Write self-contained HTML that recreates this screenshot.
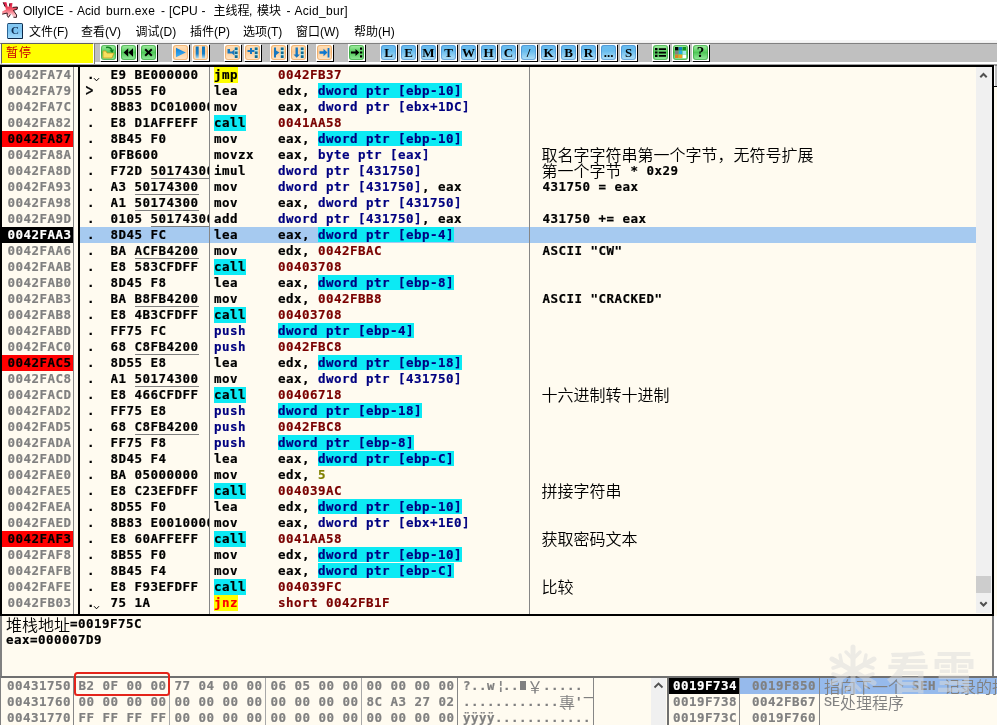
<!DOCTYPE html>
<html lang="zh-CN">
<head>
<meta charset="utf-8">
<title>OllyICE - Acid burn.exe</title>
<style>
*{box-sizing:border-box;margin:0;padding:0}
html,body{width:997px;height:725px;overflow:hidden;background:#fff}
body{position:relative;font-family:"Liberation Sans","Noto Sans CJK SC",sans-serif;font-size:12px;color:#000}
#root{position:absolute;left:0;top:0;width:997px;height:725px;overflow:hidden;will-change:transform;background:#fff}
.abs{position:absolute}
/* title + menu */
#title{position:absolute;left:0;top:0;width:997px;height:22px;background:#fff}
#title .t{position:absolute;top:3px;font-size:12px;line-height:16px;white-space:pre}
#menu{position:absolute;left:0;top:22px;width:997px;height:20px;background:#fff}
#menu span{position:absolute;top:2px;font-size:12px;line-height:16px;white-space:pre}
/* toolbar */
#tb{position:absolute;left:0;top:42px;width:997px;height:23px;background:#c0c0c0;border-top:1px solid #f0f0f0}
#tb .ln{position:absolute;left:0;top:0;width:997px;height:1px;background:#808080}
#tb .lb{position:absolute;left:0;top:19px;width:997px;height:2px;background:#fff}
#tb .lb2{position:absolute;left:0;top:21px;width:997px;height:1px;background:#a0a0a0}
#st{position:absolute;left:1px;top:0px;width:93px;height:21px;background:#ffff00;border-left:1px solid #606060;border-top:1px solid #606060;border-right:1px solid #fff;border-bottom:1px solid #fff}
#st span{position:absolute;left:4px;top:2px;font:12px/14px "Liberation Sans","Noto Sans CJK SC",sans-serif;color:#c80000;letter-spacing:1px}
.bt{position:absolute;top:1px;width:17px;height:17px;background:#fff;box-shadow:1px 1px 0 #000}
.bi{position:absolute;left:1px;top:1px;width:15px;height:15px;border-radius:3px;font:bold 13px/15px "Liberation Serif",serif;text-align:center;color:#000;overflow:hidden}
.bi svg{position:absolute;left:0;top:0}
.bi span{position:absolute;left:0;top:0;width:15px;text-align:center}
.g{background:linear-gradient(#a8f0a8,#50c858 50%,#98eca0);box-shadow:inset 0 0 0 1px rgba(40,150,50,.55)}
.o{background:linear-gradient(#ffe2bc,#fccc98 45%,#ffe8cc);box-shadow:inset 0 0 0 1px rgba(230,150,70,.55)}
.b{background:linear-gradient(#6cbef0,#68bcee 40%,#b4e2f8);box-shadow:inset 0 0 0 1px rgba(60,130,200,.55)}
/* panes */
.mono{-webkit-text-stroke:0.2px currentColor;font:bold 12.5px/16px "DejaVu Sans Mono","Liberation Mono",monospace;letter-spacing:0.4744px;white-space:pre}
#cpu{position:absolute;left:0;top:65px;width:994px;height:551px;border:2px solid #000;background:#fffbf0;overflow:hidden}
#cpuin{position:absolute;left:-2px;top:-67px;width:997px;height:725px}
.vl{position:absolute;width:1px;background:#868686}
.row{-webkit-text-stroke:0.2px currentColor;position:absolute;left:0;width:976px;height:16px;font:bold 12.5px/16px "DejaVu Sans Mono","Liberation Mono",monospace;letter-spacing:0.4744px;white-space:pre}
.row span,.row i{position:absolute;top:0;height:16px}
.row b{font-weight:bold}
.selbar{left:80px;width:896px;background:#a6caf0}
.a{left:2px;width:71px;padding-left:5.5px;color:#808080}
.abp{background:#ff0000;color:#000}
.asel{background:#000;color:#fff}
.mk{left:87px}
.mkgt{left:85.500px;font-weight:normal;font-size:13px;transform:scale(1,1.4);transform-origin:0 62%}
.jv{position:absolute;left:93px;top:10px}
.hx{left:110.500px;width:98.500px;overflow:hidden}
.hx u{text-decoration:none;display:inline-block;height:16px;border-bottom:1px solid #808080}
.mn{left:214px}
.mj{background:#ffff00}
.mz{background:#ffff00;color:#ff0000}
.mc{background:#0ceaf4}
.mp{color:#000080}
.op{left:278px}
.ok{color:#000}.on{color:#000080}.oc{color:#000080;background:#0ceaf4}.om{color:#7a0000}.oo{color:#808000}
.cm{left:542.500px}
.cm .zh{position:relative;left:-1px;top:-1px;display:inline-block;vertical-align:top;font:16px/16px "Noto Sans CJK SC","Noto Serif CJK SC",sans-serif;letter-spacing:0;font-weight:350;-webkit-text-stroke:0}
.cm .la{position:static}
.sb{position:absolute;background:#f0f0f0}
.th{position:absolute;background:#cdcdcd}

/* lower panes */
#info{position:absolute;left:0;top:616px;width:994px;height:60px;background:#fffbf0;border-left:2px solid #808080;border-right:2px solid #808080}
#info .r{position:absolute;left:4px;height:16px;color:#000}
#info .zh{display:inline-block;vertical-align:top;height:16px;font:16px/16px "Noto Sans CJK SC","Noto Serif CJK SC",sans-serif;letter-spacing:0;font-weight:350;-webkit-text-stroke:0}
#dump{position:absolute;left:0;top:676px;width:667px;height:49px;background:#fffbf0;border-top:2px solid #707070;border-left:1px solid #808080;overflow:hidden}
#stack{position:absolute;left:667px;top:676px;width:330px;height:49px;background:#fffbf0;border-top:2px solid #707070;border-left:2px solid #707070;overflow:hidden}
.dr{position:absolute;height:16px;color:#808080}
.dr>span{position:absolute;top:0;height:16px}
.szh{display:inline-block;vertical-align:top;height:16px;font:16px/16px "Noto Sans CJK SC","Noto Serif CJK SC",sans-serif;letter-spacing:0;font-weight:350;-webkit-text-stroke:0}
.blk{display:inline-block;vertical-align:top;width:6px;height:9px;margin:3px 1px 0 1px;background:#808080;color:transparent;overflow:hidden;font-size:8px;line-height:9px;letter-spacing:0}
.asc{width:130px;overflow:hidden}
#red{position:absolute;left:73.500px;top:672px;width:96.500px;height:23.500px;border:2.400px solid #e4241a;border-radius:3.500px}
#wm{position:absolute;left:824px;top:642px;width:160px;height:52px;color:#dcdcdc;opacity:0.5;white-space:pre;overflow:hidden}
</style>
</head>
<body>
<div id="root">
<div id="title">
<svg class="abs" style="left:0;top:0" width="20" height="20" viewBox="0 0 20 20"><defs><linearGradient id="ic" x1="0" y1="0" x2="0" y2="1"><stop offset="0" stop-color="#d80c3c"/><stop offset="0.450" stop-color="#f45868"/><stop offset="1" stop-color="#ffe4e6"/></linearGradient></defs><path d="M3.200 2.200 L6.400 2.200 L7.600 6.800 L9.600 6.500 L9.800 3.200 L12.400 3 L12 7.400 L17.400 7 L17.200 9.200 L13.400 10.400 L16.600 15 L16.400 17.400 L13.400 17.200 L10.800 13.200 L10 15.400 L8.400 17.400 L7.200 15.400 L7.200 13 L2.200 14.200 L2.200 11.400 L6 9.600 L5 6.600 Z" fill="url(#ic)"/><path d="M12.600 7.400 L17.400 7 L17.200 9.200 L13.400 10.400 L16.600 15 L16.400 17.400 L13.400 17.200 M10.400 14.400 L8.400 17.400 L7.200 15.400 L7.200 13 L2.200 14.200 M3.200 2.400 L5 6.600 M9.700 3.400 L9.600 6.400" fill="none" stroke="#200008" stroke-width="0.900" stroke-linejoin="round"/></svg>
<span class="t" style="left:23px">OllyICE </span><span class="t" style="left:69px">- </span><span class="t" style="left:77px">Acid </span><span class="t" style="left:106px;letter-spacing:0.3px">burn.exe </span><span class="t" style="left:161px">- </span><span class="t" style="left:169px">[CPU </span><span class="t" style="left:201.5px">- </span><span class="t" style="left:213.5px">主线程</span><span class="t" style="left:249px">, </span><span class="t" style="left:257px">模块 </span><span class="t" style="left:286.5px">- </span><span class="t" style="left:294.5px;letter-spacing:0.3px">Acid_bur]</span>
</div>
<div id="menu">
<div class="abs" style="left:7px;top:1px;width:16px;height:16px;border-radius:1.500px;background:linear-gradient(#84c8f2,#7cc4f2 50%,#a6dcfc);border:1px solid #2c6494;border-top-color:#1c4468;border-right-color:#0c2848;border-bottom-color:#0c2848;font:bold 11px/13px 'Liberation Serif',serif;text-align:center;color:#0c2c50">C</div>
<span style="left:29px">文件(F)</span><span style="left:81px">查看(V)</span><span style="left:135.5px">调试(D)</span><span style="left:190px">插件(P)</span><span style="left:243px">选项(T)</span><span style="left:296px">窗口(W)</span><span style="left:354px">帮助(H)</span>
</div>
<div id="tb">
<div class="ln"></div><div class="lb"></div><div class="lb2"></div>
<div id="st"><span>暂停</span></div>
<div class="abs" style="left:94px;top:0;width:1px;height:21px;background:#808080"></div><div class="abs" style="left:0;top:1px;width:1px;height:20px;background:#f4f4f4"></div>
<div class="bt" style="left:100px"><div class="bi g"><svg width="15" height="15" viewBox="0 0 15 15"><path d="M2 6 L2 13 L11 13 L13 8 L6 8 L5 6 Z" fill="#f8e060" stroke="#c0a020" stroke-width="0.8"/><path d="M5 2.5 C8 1.5 10.5 3 11 6" fill="none" stroke="#108020" stroke-width="1.6"/><path d="M8.5 5.5 L11.3 8 L13 4.5 Z" fill="#108020"/></svg></div></div>
<div class="bt" style="left:120px"><div class="bi g"><svg width="15" height="15" viewBox="0 0 15 15"><path d="M7.2 3.2 L7.2 11.8 L2.6 7.5 Z M12 3.2 L12 11.8 L7.4 7.5 Z" fill="#000"/></svg></div></div>
<div class="bt" style="left:140px"><div class="bi g"><svg width="15" height="15" viewBox="0 0 15 15"><path d="M4.2 4.2 L10.8 10.8 M10.8 4.2 L4.2 10.8" stroke="#000" stroke-width="2" fill="none"/></svg></div></div>
<div class="bt" style="left:172px"><div class="bi o"><svg width="15" height="15" viewBox="0 0 15 15"><defs><linearGradient id="pg" x1="0" y1="0" x2="0" y2="1"><stop offset="0" stop-color="#0c80d8"/><stop offset="1" stop-color="#48b0f0"/></linearGradient></defs><path d="M3 2.800 L12.800 7.500 L3 12.200 Z" fill="url(#pg)"/></svg></div></div>
<div class="bt" style="left:192px"><div class="bi o"><svg width="15" height="15" viewBox="0 0 15 15"><defs><linearGradient id="pb" x1="0" y1="0" x2="0" y2="1"><stop offset="0" stop-color="#0c70b8"/><stop offset="0.600" stop-color="#1880c8"/><stop offset="1" stop-color="#b8e0f0"/></linearGradient></defs><path d="M2.700 1.500 h3 v12 h-3 Z M9 1.500 h3 v12 h-3 Z" fill="url(#pb)"/></svg></div></div>
<div class="bt" style="left:224px"><div class="bi o"><svg width="15" height="15" viewBox="0 0 15 15"><path d="M2.5 4 h2.5 v2.5 h2 L9.5 4.5 v6 L7 8.5 h-4.5 Z" fill="#1878c0"/><path d="M9.800 2.500 h2.800 v10.400 h-2.800Z" fill="#a8e4f0"/><path d="M9.800 2.500 h2.800 v2.600 h-2.800Z M9.800 6.400 h2.800 v2.600 h-2.800Z M9.800 10.300 h2.800 v2.600 h-2.800Z" fill="#106c94"/></svg></div></div>
<div class="bt" style="left:244px"><div class="bi o"><svg width="15" height="15" viewBox="0 0 15 15"><path d="M2.5 5 h2.5 v-2 h2 v2 h2.5 v2 h-2.500 v2 h-2 v-2 h-2.5Z" fill="#1878c0"/><path d="M9.800 2.500 h2.800 v10.400 h-2.800Z" fill="#a8e4f0"/><path d="M9.800 2.500 h2.800 v2.600 h-2.800Z M9.800 6.400 h2.800 v2.600 h-2.800Z M9.800 10.300 h2.800 v2.600 h-2.800Z" fill="#106c94"/></svg></div></div>
<div class="bt" style="left:270px"><div class="bi o"><svg width="15" height="15" viewBox="0 0 15 15"><path d="M3 2.5 h2 v3 L8.5 7.5 L5 10 v2.5 h-2 Z" fill="#1878c0"/><path d="M9.800 2.500 h2.800 v10.400 h-2.800Z" fill="#a8e4f0"/><path d="M9.800 2.500 h2.800 v2.600 h-2.800Z M9.800 6.400 h2.800 v2.600 h-2.800Z M9.800 10.300 h2.800 v2.600 h-2.800Z" fill="#106c94"/></svg></div></div>
<div class="bt" style="left:290px"><div class="bi o"><svg width="15" height="15" viewBox="0 0 15 15"><path d="M4.5 2.5 h2.4 v7 h2 L5.7 12.8 L2.5 9.5 h2 Z" fill="#1878c0"/><path d="M9.800 2.500 h2.800 v10.400 h-2.800Z" fill="#a8e4f0"/><path d="M9.800 2.500 h2.800 v2.600 h-2.800Z M9.800 6.400 h2.800 v2.600 h-2.800Z M9.800 10.300 h2.800 v2.600 h-2.800Z" fill="#106c94"/></svg></div></div>
<div class="bt" style="left:316px"><div class="bi o"><svg width="15" height="15" viewBox="0 0 15 15"><path d="M2.5 6.3 h4 v-2.5 L10.5 7.5 L6.5 11.2 v-2.500 h-4 Z" fill="#1078d0"/><path d="M10.6 3 h1.800 v9.500 h-1.800Z" fill="#1078d0"/></svg></div></div>
<div class="bt" style="left:348px"><div class="bi g"><svg width="15" height="15" viewBox="0 0 15 15"><path d="M2 6.500 h4.500 v-2.500 L10.300 7.500 L6.500 11 v-2.500 h-4.500 Z" fill="#000"/><path d="M11 2.500 h2.200 v2.200 h-2.200Z M11 6.400 h2.200 v2.200 h-2.200Z M11 10.300 h2.200 v2.200 h-2.200Z" fill="#000"/></svg></div></div>
<div class="bt" style="left:380px"><div class="bi b"><span>L</span></div></div>
<div class="bt" style="left:400px"><div class="bi b"><span>E</span></div></div>
<div class="bt" style="left:420px"><div class="bi b"><span>M</span></div></div>
<div class="bt" style="left:440px"><div class="bi b"><span>T</span></div></div>
<div class="bt" style="left:460px"><div class="bi b"><span>W</span></div></div>
<div class="bt" style="left:480px"><div class="bi b"><span>H</span></div></div>
<div class="bt" style="left:500px"><div class="bi b"><span>C</span></div></div>
<div class="bt" style="left:520px"><div class="bi b"><span>/</span></div></div>
<div class="bt" style="left:540px"><div class="bi b"><span>K</span></div></div>
<div class="bt" style="left:560px"><div class="bi b"><span>B</span></div></div>
<div class="bt" style="left:580px"><div class="bi b"><span>R</span></div></div>
<div class="bt" style="left:600px"><div class="bi b"><span>...</span></div></div>
<div class="bt" style="left:620px"><div class="bi b"><span>S</span></div></div>
<div class="bt" style="left:652px"><div class="bi g"><svg width="15" height="15" viewBox="0 0 15 15"><path d="M2 3 h2.500 v2.200 h-2.500Z M2 6.400 h2.500 v2.200 h-2.500Z M2 9.800 h2.500 v2.200 h-2.500Z M5.800 3.300 h7.200 v1.700 h-7.200Z M5.800 6.700 h7.200 v1.700 h-7.200Z M5.800 10.100 h7.200 v1.700 h-7.200Z" fill="#000"/></svg></div></div>
<div class="bt" style="left:672px"><div class="bi g"><svg width="15" height="15" viewBox="0 0 15 15"><rect x="2" y="2" width="3.500" height="3.500" fill="#000"/><rect x="5.800" y="2" width="3.500" height="3.500" fill="#1080c0"/><rect x="9.600" y="2" width="3.500" height="3.500" fill="#109020"/><rect x="2" y="5.800" width="3.500" height="3.500" fill="#808080"/><rect x="5.800" y="5.800" width="3.500" height="3.500" fill="#20b0e0"/><rect x="9.600" y="5.800" width="3.500" height="3.500" fill="#a0e8f0"/><rect x="2" y="9.600" width="3.500" height="3.500" fill="#e08020"/><rect x="5.800" y="9.600" width="3.500" height="3.500" fill="#f0a020"/><rect x="9.600" y="9.600" width="3.500" height="3.500" fill="#ffffff"/></svg></div></div>
<div class="bt" style="left:692px"><div class="bi g"><span style="font-size:15px">?</span></div></div>
</div>
<div id="cpu"><div id="cpuin">
<div class="vl" style="left:73px;top:67px;height:547px"></div>
<div class="abs" style="left:78px;top:67px;width:2px;height:547px;background:#000"></div>
<div class="row" style="top:67px"><span class="a">0042FA74</span><span class="mk">.</span><svg class="jv" width="8" height="6" viewBox="0 0 8 6"><path d="M1 1.200 L3.500 3.800 L6 1.200" fill="none" stroke="#000" stroke-width="1"/></svg><span class="hx">E9 BE000000</span><span class="mn mj">jmp</span><span class="op"><b class="om">0042FB37</b></span></div>
<div class="row" style="top:83px"><span class="a">0042FA79</span><span class="mk mkgt">&gt;</span><span class="hx">8D55 F0</span><span class="mn ">lea</span><span class="op"><b class="ok">edx, </b><b class="oc">dword ptr [ebp-10]</b></span></div>
<div class="row" style="top:99px"><span class="a">0042FA7C</span><span class="mk">.</span><span class="hx">8B83 DC010000</span><span class="mn ">mov</span><span class="op"><b class="ok">eax, </b><b class="on">dword ptr [ebx+1DC]</b></span></div>
<div class="row" style="top:115px"><span class="a">0042FA82</span><span class="mk">.</span><span class="hx">E8 D1AFFEFF</span><span class="mn mc">call</span><span class="op"><b class="om">0041AA58</b></span></div>
<div class="row" style="top:131px"><span class="a abp">0042FA87</span><span class="mk">.</span><span class="hx">8B45 F0</span><span class="mn ">mov</span><span class="op"><b class="ok">eax, </b><b class="oc">dword ptr [ebp-10]</b></span></div>
<div class="row" style="top:147px"><span class="a">0042FA8A</span><span class="mk">.</span><span class="hx">0FB600</span><span class="mn ">movzx</span><span class="op"><b class="ok">eax, </b><b class="on">byte ptr [eax]</b></span><span class="cm"><span class="zh">取名字字符串第一个字节，无符号扩展</span></span></div>
<div class="row" style="top:163px"><span class="a">0042FA8D</span><span class="mk">.</span><span class="hx">F72D <u>50174300</u></span><span class="mn ">imul</span><span class="op"><b class="on">dword ptr [431750]</b></span><span class="cm"><span class="zh">第一个字节</span><span class="la"> * 0x29</span></span></div>
<div class="row" style="top:179px"><span class="a">0042FA93</span><span class="mk">.</span><span class="hx">A3 <u>50174300</u></span><span class="mn ">mov</span><span class="op"><b class="on">dword ptr [431750]</b><b class="ok">, eax</b></span><span class="cm"><span class="la">431750 = eax</span></span></div>
<div class="row" style="top:195px"><span class="a">0042FA98</span><span class="mk">.</span><span class="hx">A1 <u>50174300</u></span><span class="mn ">mov</span><span class="op"><b class="ok">eax, </b><b class="on">dword ptr [431750]</b></span></div>
<div class="row" style="top:211px"><span class="a">0042FA9D</span><span class="mk">.</span><span class="hx">0105 <u>50174300</u></span><span class="mn ">add</span><span class="op"><b class="on">dword ptr [431750]</b><b class="ok">, eax</b></span><span class="cm"><span class="la">431750 += eax</span></span></div>
<div class="row" style="top:227px"><i class="selbar"></i><span class="a asel">0042FAA3</span><span class="mk">.</span><span class="hx">8D45 FC</span><span class="mn ">lea</span><span class="op"><b class="ok">eax, </b><b class="oc">dword ptr [ebp-4]</b></span></div>
<div class="row" style="top:243px"><span class="a">0042FAA6</span><span class="mk">.</span><span class="hx">BA <u>ACFB4200</u></span><span class="mn ">mov</span><span class="op"><b class="ok">edx, </b><b class="om">0042FBAC</b></span><span class="cm"><span class="la">ASCII "CW"</span></span></div>
<div class="row" style="top:259px"><span class="a">0042FAAB</span><span class="mk">.</span><span class="hx">E8 583CFDFF</span><span class="mn mc">call</span><span class="op"><b class="om">00403708</b></span></div>
<div class="row" style="top:275px"><span class="a">0042FAB0</span><span class="mk">.</span><span class="hx">8D45 F8</span><span class="mn ">lea</span><span class="op"><b class="ok">eax, </b><b class="oc">dword ptr [ebp-8]</b></span></div>
<div class="row" style="top:291px"><span class="a">0042FAB3</span><span class="mk">.</span><span class="hx">BA <u>B8FB4200</u></span><span class="mn ">mov</span><span class="op"><b class="ok">edx, </b><b class="om">0042FBB8</b></span><span class="cm"><span class="la">ASCII "CRACKED"</span></span></div>
<div class="row" style="top:307px"><span class="a">0042FAB8</span><span class="mk">.</span><span class="hx">E8 4B3CFDFF</span><span class="mn mc">call</span><span class="op"><b class="om">00403708</b></span></div>
<div class="row" style="top:323px"><span class="a">0042FABD</span><span class="mk">.</span><span class="hx">FF75 FC</span><span class="mn mp">push</span><span class="op"><b class="oc">dword ptr [ebp-4]</b></span></div>
<div class="row" style="top:339px"><span class="a">0042FAC0</span><span class="mk">.</span><span class="hx">68 <u>C8FB4200</u></span><span class="mn mp">push</span><span class="op"><b class="om">0042FBC8</b></span></div>
<div class="row" style="top:355px"><span class="a abp">0042FAC5</span><span class="mk">.</span><span class="hx">8D55 E8</span><span class="mn ">lea</span><span class="op"><b class="ok">edx, </b><b class="oc">dword ptr [ebp-18]</b></span></div>
<div class="row" style="top:371px"><span class="a">0042FAC8</span><span class="mk">.</span><span class="hx">A1 <u>50174300</u></span><span class="mn ">mov</span><span class="op"><b class="ok">eax, </b><b class="on">dword ptr [431750]</b></span></div>
<div class="row" style="top:387px"><span class="a">0042FACD</span><span class="mk">.</span><span class="hx">E8 466CFDFF</span><span class="mn mc">call</span><span class="op"><b class="om">00406718</b></span><span class="cm"><span class="zh">十六进制转十进制</span></span></div>
<div class="row" style="top:403px"><span class="a">0042FAD2</span><span class="mk">.</span><span class="hx">FF75 E8</span><span class="mn mp">push</span><span class="op"><b class="oc">dword ptr [ebp-18]</b></span></div>
<div class="row" style="top:419px"><span class="a">0042FAD5</span><span class="mk">.</span><span class="hx">68 <u>C8FB4200</u></span><span class="mn mp">push</span><span class="op"><b class="om">0042FBC8</b></span></div>
<div class="row" style="top:435px"><span class="a">0042FADA</span><span class="mk">.</span><span class="hx">FF75 F8</span><span class="mn mp">push</span><span class="op"><b class="oc">dword ptr [ebp-8]</b></span></div>
<div class="row" style="top:451px"><span class="a">0042FADD</span><span class="mk">.</span><span class="hx">8D45 F4</span><span class="mn ">lea</span><span class="op"><b class="ok">eax, </b><b class="oc">dword ptr [ebp-C]</b></span></div>
<div class="row" style="top:467px"><span class="a">0042FAE0</span><span class="mk">.</span><span class="hx">BA 05000000</span><span class="mn ">mov</span><span class="op"><b class="ok">edx, </b><b class="oo">5</b></span></div>
<div class="row" style="top:483px"><span class="a">0042FAE5</span><span class="mk">.</span><span class="hx">E8 C23EFDFF</span><span class="mn mc">call</span><span class="op"><b class="om">004039AC</b></span><span class="cm"><span class="zh">拼接字符串</span></span></div>
<div class="row" style="top:499px"><span class="a">0042FAEA</span><span class="mk">.</span><span class="hx">8D55 F0</span><span class="mn ">lea</span><span class="op"><b class="ok">edx, </b><b class="oc">dword ptr [ebp-10]</b></span></div>
<div class="row" style="top:515px"><span class="a">0042FAED</span><span class="mk">.</span><span class="hx">8B83 E0010000</span><span class="mn ">mov</span><span class="op"><b class="ok">eax, </b><b class="on">dword ptr [ebx+1E0]</b></span></div>
<div class="row" style="top:531px"><span class="a abp">0042FAF3</span><span class="mk">.</span><span class="hx">E8 60AFFEFF</span><span class="mn mc">call</span><span class="op"><b class="om">0041AA58</b></span><span class="cm"><span class="zh">获取密码文本</span></span></div>
<div class="row" style="top:547px"><span class="a">0042FAF8</span><span class="mk">.</span><span class="hx">8B55 F0</span><span class="mn ">mov</span><span class="op"><b class="ok">edx, </b><b class="oc">dword ptr [ebp-10]</b></span></div>
<div class="row" style="top:563px"><span class="a">0042FAFB</span><span class="mk">.</span><span class="hx">8B45 F4</span><span class="mn ">mov</span><span class="op"><b class="ok">eax, </b><b class="oc">dword ptr [ebp-C]</b></span></div>
<div class="row" style="top:579px"><span class="a">0042FAFE</span><span class="mk">.</span><span class="hx">E8 F93EFDFF</span><span class="mn mc">call</span><span class="op"><b class="om">004039FC</b></span><span class="cm"><span class="zh">比较</span></span></div>
<div class="row" style="top:595px"><span class="a">0042FB03</span><span class="mk">.</span><svg class="jv" width="8" height="6" viewBox="0 0 8 6"><path d="M1 1.200 L3.500 3.800 L6 1.200" fill="none" stroke="#000" stroke-width="1"/></svg><span class="hx">75 1A</span><span class="mn mz">jnz</span><span class="op"><b class="om">short 0042FB1F</b></span></div>

<div class="vl" style="left:209px;top:67px;height:547px"></div>
<div class="vl" style="left:529px;top:67px;height:547px"></div>
<div class="sb" style="left:976px;top:67px;width:16px;height:546px"></div>
<div class="th" style="left:976px;top:576px;width:15px;height:17px"></div>
<svg class="abs" style="left:976px;top:67px" width="15" height="15" viewBox="0 0 15 15"><path d="M4.300 10.200 L7.500 7 L10.700 10.200" fill="none" stroke="#505050" stroke-width="2"/></svg>
<svg class="abs" style="left:976px;top:597px" width="15" height="15" viewBox="0 0 15 15"><path d="M4.300 5.300 L7.500 8.500 L10.700 5.300" fill="none" stroke="#505050" stroke-width="2"/></svg>
</div></div>
<div class="abs" style="left:994px;top:65px;width:3px;height:551px;background:#fffbf0"></div>
<div class="abs" style="left:994px;top:65px;width:3px;height:21px;background:#c0c0c0;border-left:1px solid #fff;border-top:1px solid #808080"></div>
<div class="abs" style="left:994px;top:86px;width:3px;height:1px;background:#000"></div>
<div class="abs" style="left:0;top:40px;width:997px;height:2px;background:#f6f6f6"></div>
<div id="info">
<div class="r mono" style="top:0"><span class="zh">堆栈地址</span>=0019F75C</div>
<div class="r mono" style="top:16px">eax=000007D9</div>
</div>
<div id="dump">
<div class="vl" style="left:72px;top:0;height:48px"></div>
<div class="vl" style="left:168px;top:0;height:48px;background:#a8a8a8"></div>
<div class="vl" style="left:264px;top:0;height:48px;background:#a8a8a8"></div>
<div class="vl" style="left:360px;top:0;height:48px;background:#a8a8a8"></div>
<div class="vl" style="left:456px;top:0;height:48px"></div>
<div class="vl" style="left:592px;top:0;height:48px"></div>
<div class="dr mono" style="left:0;top:0px;width:667px"><span style="left:6px">00431750</span><span style="left:77.5px">B2 0F 00 00</span><span style="left:173.5px">77 04 00 00</span><span style="left:269.5px">06 05 00 00</span><span style="left:365.5px">00 00 00 00</span><span class="asc" style="left:462px">?..w<span style="position:relative;left:2px">¦</span>..<span class="blk">▮</span><span class="szh" style="position:static;width:16px;font-weight:400">￥</span>.....</span></div>
<div class="dr mono" style="left:0;top:16px;width:667px"><span style="left:6px">00431760</span><span style="left:77.5px">00 00 00 00</span><span style="left:173.5px">00 00 00 00</span><span style="left:269.5px">00 00 00 00</span><span style="left:365.5px">8C A3 27 02</span><span class="asc" style="left:462px">............<span class="szh" style="position:static">專</span>'<span class="szh" style="position:relative;top:-5px">一</span></span></div>
<div class="dr mono" style="left:0;top:32px;width:667px"><span style="left:6px">00431770</span><span style="left:77.5px">FF FF FF FF</span><span style="left:173.5px">00 00 00 00</span><span style="left:269.5px">00 00 00 00</span><span style="left:365.5px">00 00 00 00</span><span class="asc" style="left:462px">ÿÿÿÿ............</span></div>
<div class="sb" style="left:650px;top:0;width:15px;height:48px"></div>
<svg class="abs" style="left:650px;top:0" width="15" height="15" viewBox="0 0 15 15"><path d="M3.5 9.5 L7.5 5.5 L11.5 9.5" fill="none" stroke="#505050" stroke-width="1.8"/></svg>
</div>
<div id="stack">
<div class="abs" style="left:0;top:0;width:70px;height:16px;background:#000"></div>
<div class="abs" style="left:71px;top:0;width:260px;height:16px;background:#96baec"></div>
<div class="vl" style="left:70px;top:0;height:48px"></div>
<div class="vl" style="left:150px;top:0;height:48px"></div>
<div class="dr mono" style="left:0;top:0;width:330px"><span style="left:4px;color:#fff">0019F734</span><span style="left:83px">0019F850</span><span style="left:155px"><span class="szh" style="position:static">指向下一个</span> SEH <span class="szh" style="position:static">记录的指针</span></span></div>
<div class="dr mono" style="left:0;top:16px;width:330px"><span style="left:4px">0019F738</span><span style="left:83px">0042FB67</span><span style="left:155px"><span style="position:static;font:13.333px/16px 'Liberation Mono',monospace;letter-spacing:0">SE</span><span class="szh" style="position:static">处理程序</span></span></div>
<div class="dr mono" style="left:0;top:32px;width:330px"><span style="left:4px">0019F73C</span><span style="left:83px">0019F760</span></div>
</div>
<div id="red"></div>
<div id="wm"><svg class="abs" style="left:2px;top:2px" width="54" height="54" viewBox="-27 -27 54 54"><g stroke="#dcdcdc" stroke-width="5" stroke-linecap="round" fill="none"><path d="M0 -24 L0 24 M-21 -12 L21 12 M-21 12 L21 -12"/><path d="M-7 -19 L0 -12 L7 -19 M-7 19 L0 12 L7 19 M-20 -3 L-11 -6 L-13 -16 M20 3 L11 6 L13 16 M-20 3 L-11 6 L-13 16 M20 -3 L11 -6 L13 -16" stroke-width="3.5"/></g></svg><span class="abs" style="left:62px;top:2px;font:700 44px/52px 'Noto Sans CJK SC',sans-serif;letter-spacing:2px">看雪</span></div>

</div>
</body>
</html>
